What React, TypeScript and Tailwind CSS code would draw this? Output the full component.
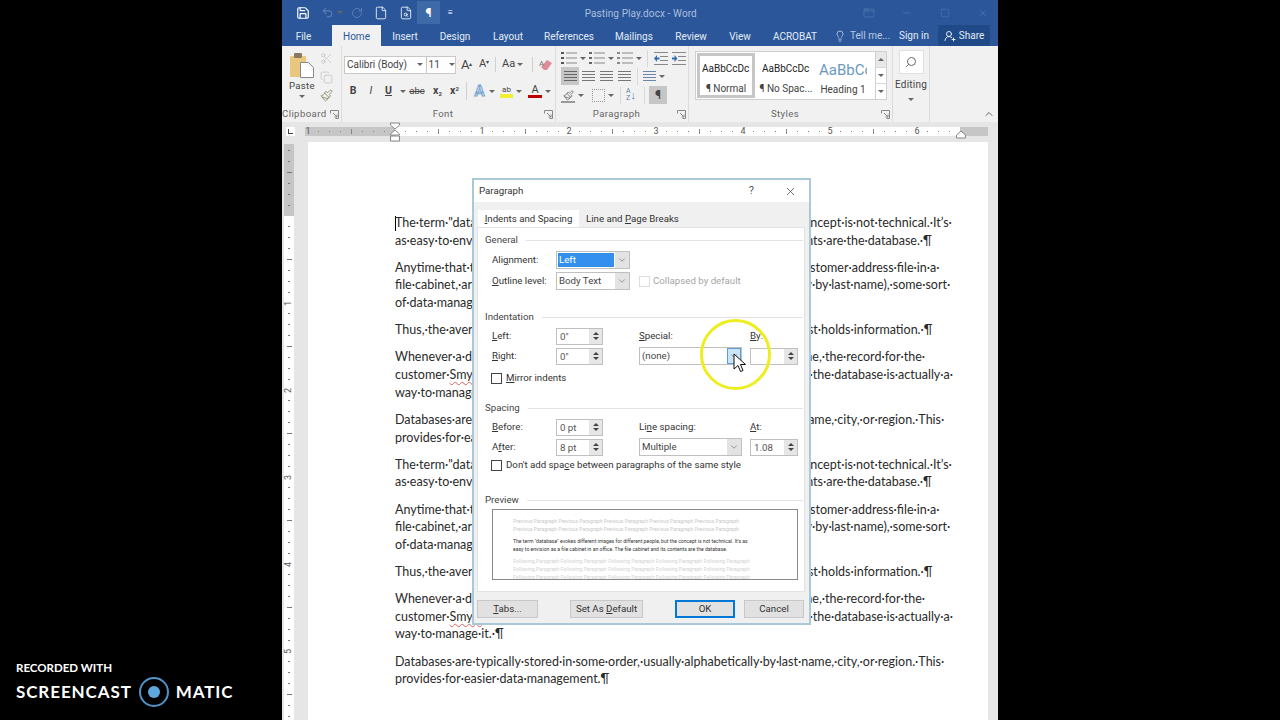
import React from 'react';
import { Save, Undo2, RotateCw, File, FileSearch, Scissors, Copy, Paintbrush, Search, UserRoundPlus, Lightbulb, X, Minus, Square, ChevronUp, ChevronDown, AppWindow } from 'lucide-react';

const paragraphs: string[][] = [
  ['The·term·"database"·evokes·different·images·for·different·people,·but·the·concept·is·not·technical.·It’s·', 'as·easy·to·envision·as·a·file·cabinet·in·a·office.·The·file·cabinet·and·its·contents·are·the·database.·¶'],
  ['Anytime·that·there·is·organized·information,·such·as·when·you·do·keep·a·customer·address·file·in·a·', 'file·cabinet,·arranged·and·filed·in·a·very·specific·order·(such·as·alphabetically·by·last·name),·some·sort·', 'of·data·management·is·occurring.¶'],
  ['Thus,·the·average·person·on·the·street·already·knows·that·a·big·database·just·holds·information.·¶'],
  ['Whenever·a·database·is·quickly·searched·for·a·very·particular·customer·name,·the·record·for·the·', 'customer·Smyth·is·returned·immediately·and·correctly·to·a·user.·In·this·way,·the·database·is·actually·a·', 'way·to·manage·it.·¶'],
  ['Databases·are·typically·stored·in·some·order,·usually·alphabetically·by·last·name,·city,·or·region.·This·', 'provides·for·easier·data·management.¶'],
];

const tabs = [
  { label: 'File', w: 'w-[43px] mr-[7px]' },
  { label: 'Home', w: 'w-[49px] bg-[#f1f1f1] text-[#2b579a]' },
  { label: 'Insert', w: 'w-[48px]' },
  { label: 'Design', w: 'w-[52px]' },
  { label: 'Layout', w: 'w-[54px]' },
  { label: 'References', w: 'w-[68px]' },
  { label: 'Mailings', w: 'w-[62px]' },
  { label: 'Review', w: 'w-[52px]' },
  { label: 'View', w: 'w-[46px]' },
  { label: 'ACROBAT', w: 'w-[64px]' },
];

function Caret({ className = '' }: { className?: string }) {
  return <span className={'inline-block h-0 w-0 shrink-0 border-x-[3px] border-t-[3px] border-x-transparent border-t-[#666] ' + className} />;
}

function Lines({ n, w = 13, color = '#777' }: { n: number; w?: number; color?: string }) {
  return (
    <svg width={w} height={n * 3 + 1} className="block">
      {Array.from({ length: n }).map((_, i) => (
        <rect key={i} x={0} y={i * 3 + 1} width={w} height={1} fill={color} />
      ))}
    </svg>
  );
}

function IndentIcon({ flip }: { flip?: boolean }) {
  return (
    <svg width="14" height="13" viewBox="0 0 14 13" className="block">
      <rect x="0" y="0" width="14" height="1" fill="#888" />
      <rect x="6" y="4" width="8" height="1" fill="#888" />
      <rect x="6" y="8" width="8" height="1" fill="#888" />
      <rect x="0" y="12" width="14" height="1" fill="#888" />
      <path d={flip ? 'M0 5.5h2.5V3l3 3.5-3 3.5V7.500H0z' : 'M5.500 5.500H3V3L0 6.500 3 10V7.500h2.500z'} fill="#2f6fb5" />
    </svg>
  );
}

function ListIcon({ marker }: { marker: string }) {
  return (
    <span className="flex items-center gap-[3px]">
      <svg width="16" height="14" viewBox="0 0 16 14">
        <rect x="0" y="1" width="3" height="2" fill={marker} />
        <rect x="0" y="6" width="3" height="2" fill={marker} />
        <rect x="0" y="11" width="3" height="2" fill={marker} />
        <rect x="5" y="1.5" width="11" height="1" fill="#888" />
        <rect x="5" y="6.5" width="11" height="1" fill="#888" />
        <rect x="5" y="11.5" width="11" height="1" fill="#888" />
      </svg>
      <Caret />
    </span>
  );
}

function Launcher() {
  return (
    <svg width="9" height="9" viewBox="0 0 9 9" className="shrink-0">
      <path d="M.5 3.500V.5h8v8h-3M3 3l4 4M7 4.500V7H4.500" fill="none" stroke="#888" />
    </svg>
  );
}

function Group({ width, label, labelClass = '', children }: { width: string; label: string; labelClass?: string; children: React.ReactNode }) {
  return (
    <div className={'flex h-full shrink-0 flex-col border-r border-[#dcdcdc] ' + width}>
      <div className="min-h-0 flex-1">{children}</div>
      <div className="flex h-[16px] items-center pr-[2px] text-[#666]">
        <span className={'flex-1 pt-px text-center text-[9.6px] tracking-[0.4px] ' + labelClass}>{label}</span>
        <Launcher />
      </div>
    </div>
  );
}

function RulerInch({ label }: { label?: string }) {
  return (
    <div className="grid h-full w-[87px] shrink-0 grid-cols-8 items-center">
      {Array.from({ length: 8 }).map((_, i) => (
        <div key={i} className="flex h-full w-0 items-center justify-center overflow-visible">
          {i === 0 ? (
            label ? <span className="text-[9px] leading-none text-[#555]">{label}</span> : null
          ) : i === 4 ? (
            <span className="h-[5px] w-px shrink-0 bg-[#888]" />
          ) : (
            <span className="h-px w-px shrink-0 bg-[#888]" />
          )}
        </div>
      ))}
    </div>
  );
}

function VRulerInch({ label }: { label?: string }) {
  return (
    <div className="grid h-[87px] w-full shrink-0 grid-rows-8 justify-items-center">
      {Array.from({ length: 8 }).map((_, i) => (
        <div key={i} className="flex h-0 w-full items-center justify-center overflow-visible">
          {i === 0 ? (
            label ? <span className="-rotate-90 text-[9px] leading-none text-[#555]">{label}</span> : null
          ) : i === 4 ? (
            <span className="h-px w-[5px] shrink-0 bg-[#777]" />
          ) : (
            <span className="h-px w-[2px] shrink-0 bg-[#777]" />
          )}
        </div>
      ))}
    </div>
  );
}

function SpinBox({ value, className = 'w-[47px]' }: { value: string; className?: string }) {
  return (
    <div className={'flex h-[17px] items-stretch border border-[#c0c0c0] bg-white ' + className}>
      <span className="flex-1 pl-[3px] leading-[15px] text-[#555]">{value}</span>
      <span className="flex w-[13px] flex-col items-center justify-center gap-[2px] bg-[#e6e6e6]">
        <span className="h-0 w-0 border-x-[3px] border-b-[3px] border-x-transparent border-b-[#444]" />
        <span className="h-0 w-0 border-x-[3px] border-t-[3px] border-x-transparent border-t-[#444]" />
      </span>
    </div>
  );
}

function Select({ value, className, selected, active }: { value: string; className: string; selected?: boolean; active?: boolean }) {
  return (
    <div className={'flex h-[18px] items-stretch border border-[#c0c0c0] bg-white ' + className}>
      <span className={'m-px flex-1 pl-px leading-[14px] ' + (selected ? 'bg-[#3390ee] text-white' : 'text-[#444]')}>{value}</span>
      <span className={'flex w-[14px] items-center justify-center ' + (active ? 'border border-[#5a9fd8] bg-[#cce4f7]' : 'bg-[#e3e3e3]')}>
        <ChevronDown size={10} strokeWidth={1.5} color="#666" />
      </span>
    </div>
  );
}

function Check({ disabled }: { disabled?: boolean }) {
  return <span className={'block h-[11px] w-[11px] shrink-0 border bg-white ' + (disabled ? 'border-[#ddd]' : 'border-[#444]')} />;
}

function Heading({ children }: { children: React.ReactNode }) {
  return (
    <div className="flex h-[18px] items-center gap-[8px] pl-[7px] pr-[1px] text-[#444]">
      <span className="pt-px">{children}</span>
      <span className="h-px flex-1 bg-[#e3e3e3]" />
    </div>
  );
}

function DialogButton({ children, className = '' }: { children: React.ReactNode; className?: string }) {
  return <button className={'flex h-[18px] w-[60px] items-center justify-center bg-[#e1e1e1] text-[#333] ' + className}>{children}</button>;
}

function Preview() {
  const prev = 'Previous Paragraph Previous Paragraph Previous Paragraph Previous Paragraph Previous Paragraph';
  const next = 'Following Paragraph Following Paragraph Following Paragraph Following Paragraph Following Paragraph';
  return (
    <div className="ml-[14px] h-[71px] w-[306px] overflow-hidden border border-[#8a8a8a] bg-white pl-[20px] pt-[7px] text-[5.1px] leading-[8px] whitespace-nowrap">
      <div className="text-[#c8c8c8]">{prev}</div>
      <div className="text-[#c8c8c8]">{prev}</div>
      <div className="mt-[4px] text-[#333]">The term "database" evokes different images for different people, but the concept is not technical. It's as</div>
      <div className="text-[#333]">easy to envision as a file cabinet in an office. The file cabinet and its contents are the database.</div>
      <div className="mt-[4px] text-[#d2d2d2]">{next}</div>
      <div className="text-[#d2d2d2]">{next}</div>
      <div className="text-[#d2d2d2]">{next}</div>
    </div>
  );
}

function ParagraphDialog() {
  return (
    <div className="absolute left-[472px] top-[178px] z-10 flex h-[447px] w-[339px] flex-col border-2 border-[#a9c8d8] bg-[#f0f0f0] text-[9.7px] text-[#333] [font-family:Roboto,sans-serif]">
      <div className="flex h-[22px] shrink-0 items-center bg-white pl-[5px] text-[#333]">
        <span className="flex-1">Paragraph</span>
        <span className="mr-[30px] text-[11px] text-[#555]">?</span>
        <X size={13} strokeWidth={1.2} color="#333" className="mr-[12px]" />
      </div>
      <div className="flex h-[25px] shrink-0 items-end pl-[4px]">
        <div className="flex h-[17px] w-[101px] items-center justify-center bg-white pt-[2px]"><span><u>I</u>ndents and Spacing</span></div>
        <div className="flex h-[17px] items-center pl-[7px] pt-[2px]"><span>Line and <u>P</u>age Breaks</span></div>
      </div>
      <div className="ml-[3px] mr-[4px] flex h-[365px] shrink-0 flex-col border border-[#e2e2e2] bg-white pt-[3px]">
        <Heading>General</Heading>
        <div className="mt-px flex h-[20px] items-center pl-[14px] [&>span]:pt-px">
          <span className="w-[64px]">Ali<u>g</u>nment:</span>
          <Select value="Left" selected className="w-[74px]" />
        </div>
        <div className="mt-px flex h-[20px] items-center pl-[14px] [&>span]:pt-px">
          <span className="w-[64px]"><u>O</u>utline level:</span>
          <Select value="Body Text" className="w-[74px]" />
          <span className="ml-[9px] mr-[3px]"><Check disabled /></span>
          <span className="text-[#a6a6a6]">Collapsed by default</span>
        </div>
        <div className="mt-[17px]"><Heading>Indentation</Heading></div>
        <div className="mt-px flex h-[18px] items-center pl-[14px] [&>span]:pt-px">
          <span className="w-[64px]"><u>L</u>eft:</span>
          <SpinBox value="0&quot;" />
          <span className="ml-[36px] w-[111px]"><u>S</u>pecial:</span>
          <span><u>B</u>y:</span>
        </div>
        <div className="mt-[2px] flex h-[18px] items-center pl-[14px] [&>span]:pt-px">
          <span className="w-[64px]"><u>R</u>ight:</span>
          <SpinBox value="0&quot;" />
          <Select value="(none)" active className="ml-[36px] w-[103px]" />
          <SpinBox value="" className="ml-[8px] w-[48px]" />
        </div>
        <div className="mt-[4px] flex h-[18px] items-center gap-[3px] pl-[13px] [&>span]:pt-px">
          <Check />
          <span className="ml-[1px]"><u>M</u>irror indents</span>
        </div>
        <div className="mt-[12px]"><Heading>Spacing</Heading></div>
        <div className="mt-px flex h-[18px] items-center pl-[14px] [&>span]:pt-px">
          <span className="w-[64px]"><u>B</u>efore:</span>
          <SpinBox value="0 pt" />
          <span className="ml-[36px] w-[111px]">Li<u>n</u>e spacing:</span>
          <span><u>A</u>t:</span>
        </div>
        <div className="mt-[2px] flex h-[18px] items-center pl-[14px] [&>span]:pt-px">
          <span className="w-[64px]">A<u>f</u>ter:</span>
          <SpinBox value="8 pt" />
          <Select value="Multiple" className="ml-[36px] w-[103px]" />
          <SpinBox value="1.08" className="ml-[8px] w-[48px]" />
        </div>
        <div className="flex h-[18px] items-center gap-[3px] pl-[13px] [&>span]:pt-px">
          <Check />
          <span className="ml-[1px]">Don't add spa<u>c</u>e between paragraphs of the same style</span>
        </div>
        <div className="mt-[17px]"><Heading>Preview</Heading></div>
        <Preview />
      </div>
      <div className="flex flex-1 items-center pl-[3px] pt-[3px]">
        <DialogButton className="w-[61px] border border-[#c8c8c8]"><span><u>T</u>abs...</span></DialogButton>
        <DialogButton className="ml-[32px] w-[73px] border border-[#c8c8c8]"><span>Set As <u>D</u>efault</span></DialogButton>
        <DialogButton className="ml-[32px] border-2 border-[#0078d7]">OK</DialogButton>
        <DialogButton className="ml-[9px] border border-[#c8c8c8]">Cancel</DialogButton>
      </div>
    </div>
  );
}

function Ribbon() {
  return (
    <div className="flex h-[76px] shrink-0 bg-[#f1f1f1] text-[#444]">
      <Group width="w-[60px]" label="Clipboard" labelClass="text-left">
        <div className="flex pl-[8px] pt-[7px]">
          <div className="flex w-[24px] flex-col items-center">
            <svg width="24" height="25" viewBox="0 0 24 25" className="block shrink-0">
              <rect x="0" y="3" width="16" height="21" rx="1" fill="#e9c77f" />
              <rect x="4" y="0" width="8" height="5" rx="1" fill="#8a7a60" />
              <path d="M10.500 9.500h8l5 5v10h-13z" fill="#fff" stroke="#888" />
            </svg>
            <span className="mt-[1px] text-[9.6px] leading-[14px] tracking-[0.3px]">Paste</span>
            <Caret className="mt-[2px]" />
          </div>
          <div className="-mt-px ml-[6px] flex flex-col gap-[5.5px]">
            <Scissors size={13} strokeWidth={1.2} color="#bbb" />
            <Copy size={13} strokeWidth={1.2} color="#bbb" />
            <Paintbrush size={13} strokeWidth={1.6} color="#8a8a6a" />
          </div>
        </div>
      </Group>
      <Group width="w-[214px]" label="Font">
        <div className="pl-[2px] pt-[9px]">
          <div className="flex h-[19px] items-center">
            <div className="flex h-[18px] w-[112px] items-center border border-[#c8c8c8] bg-white text-[10px]">
              <span className="w-[77px] pl-[2px]">Calibri (Body)</span>
              <Caret />
              <span className="ml-[3px] h-full w-px bg-[#c8c8c8]" />
              <span className="w-[24px] pl-[2px]">11</span>
              <Caret />
            </div>
            <span className="ml-[5px] w-[18px] text-[13px]">A<sup className="text-[6px]">▴</sup></span>
            <span className="w-[15px] text-[11px]">A<sup className="text-[6px]">▾</sup></span>
            <span className="ml-px h-[15px] w-px bg-[#d0d0d0]" />
            <span className="ml-[6px] flex w-[24px] items-center gap-[2px] text-[11px]">Aa<Caret /></span>
            <span className="ml-[6px] h-[15px] w-px bg-[#d0d0d0]" />
            <svg width="14" height="13" viewBox="0 0 14 13" className="ml-[6px] shrink-0">
              <path d="M2 9l6-7 5 3-5 7H5z" fill="#e08a9a" />
              <text x="0" y="8" fontSize="8" fill="#777">A</text>
            </svg>
          </div>
          <div className="mt-[7px] flex h-[20px] items-center text-[10.5px]">
            <span className="w-[18px] text-center font-bold">B</span>
            <span className="w-[18px] text-center italic">I</span>
            <span className="w-[17px] text-center font-bold underline">U</span>
            <Caret className="ml-[3px]" />
            <span className="w-[22px] text-center text-[9.5px] line-through">abc</span>
            <span className="w-[19px] text-center font-bold">x<sub className="text-[6px]">2</sub></span>
            <span className="w-[15px] text-center font-bold">x<sup className="text-[6px]">2</sup></span>
            <span className="ml-[4px] h-[18px] w-px bg-[#d0d0d0]" />
            <span className="ml-[5px] w-[15px] text-center text-[15px] leading-none font-bold text-[#e4eef8] [-webkit-text-stroke:1px_#7aa7d0]">A</span>
            <Caret className="ml-[2px]" />
            <span className="ml-[5px] flex w-[13px] flex-col items-center text-[8px] leading-[9px]">
              ab<span className="h-[4px] w-full bg-[#f2ee30]" />
            </span>
            <Caret className="ml-[3px]" />
            <span className="ml-[6px] flex w-[14px] flex-col items-center text-[11px] leading-[11px]">
              A<span className="h-[3px] w-full bg-[#c00000]" />
            </span>
            <Caret className="ml-[3px]" />
          </div>
        </div>
      </Group>
      <Group width="w-[133px]" label="Paragraph">
        <div className="pl-[5px] pt-[3px]">
          <div className="flex h-[18px] items-center">
            <ListIcon marker="#555" />
            <span className="ml-[3px]"><ListIcon marker="#666" /></span>
            <span className="ml-[3px]"><ListIcon marker="#888" /></span>
            <span className="ml-[5px] h-[17px] w-px bg-[#d8d8d8]" />
            <span className="ml-[6px]"><IndentIcon /></span>
            <span className="ml-[4px]"><IndentIcon flip /></span>
          </div>
          <div className="flex h-[18px] items-center">
            <span className="flex h-[18px] w-[18px] items-center justify-center bg-[#c6c6c6]"><Lines n={4} color="#666" /></span>
            <span className="flex w-[18px] justify-center"><Lines n={4} /></span>
            <span className="flex w-[18px] justify-center"><Lines n={4} /></span>
            <span className="flex w-[18px] justify-center"><Lines n={4} /></span>
            <span className="ml-[4px] h-[17px] w-px bg-[#d8d8d8]" />
            <span className="ml-[5px] flex items-center gap-[3px]"><Lines n={4} color="#6b86ab" /><Caret /></span>
          </div>
          <div className="mt-px flex h-[18px] items-center">
            <span className="flex h-[15px] w-[14px] items-end justify-center border-b-2 border-[#999]"><Paintbrush size={11} color="#777" /></span>
            <Caret className="ml-[3px]" />
            <span className="ml-[8px] h-[13px] w-[13px] border border-dotted border-[#999]" />
            <Caret className="ml-[3px]" />
            <span className="ml-[6px] h-[17px] w-px bg-[#d8d8d8]" />
            <span className="ml-[5px] flex w-[14px] items-center text-[7px] leading-[7px] text-[#5f7fa8]">
              <span>A<br />Z</span>
              <span className="text-[11px] leading-none">↓</span>
            </span>
            <span className="ml-[4px] h-[17px] w-px bg-[#d8d8d8]" />
            <span className="ml-[4px] flex h-[18px] w-[18px] items-center justify-center bg-[#c6c6c6] text-[12px] font-bold">¶</span>
          </div>
        </div>
      </Group>
      <Group width="w-[204px]" label="Styles">
        <div className="ml-[6px] mt-[5px] flex h-[49px] w-[192px] border border-[#d0d0d0] bg-white">
          <div className="m-[1px] flex w-[58px] flex-col items-center justify-center gap-[8px] overflow-hidden border-[3px] border-[#c6c6c6] pt-[7px] text-[10px] leading-[12px] whitespace-nowrap">
            <span className="w-[48px] overflow-hidden text-[#222]">AaBbCcDc</span>
            <span>¶ Normal</span>
          </div>
          <div className="ml-[3px] flex w-[54px] flex-col items-center justify-center gap-[8px] overflow-hidden pt-[7px] text-[10px] leading-[12px] whitespace-nowrap">
            <span className="w-[48px] overflow-hidden text-[#222]">AaBbCcDc</span>
            <span>¶ No Spac...</span>
          </div>
          <div className="flex w-[60px] flex-col items-center justify-center gap-[6px] overflow-hidden pt-[6px] text-[10px] leading-[12px] whitespace-nowrap">
            <span className="w-[48px] overflow-hidden text-[15px] leading-[16px] text-[#6a9ac0]">AaBbCc</span>
            <span>Heading 1</span>
          </div>
          <div className="ml-auto flex w-[11px] flex-col border-l border-[#d0d0d0] bg-white">
            <span className="flex flex-1 items-center justify-center bg-[#e8e8e8]"><Caret className="rotate-180" /></span>
            <span className="flex flex-1 items-center justify-center border-y border-[#d8d8d8]"><Caret /></span>
            <span className="flex flex-1 items-center justify-center"><Caret /></span>
          </div>
        </div>
      </Group>
      <div className="flex w-[37px] shrink-0 flex-col items-center border-r border-[#dcdcdc] pt-[4px]">
        <span className="flex h-[24px] w-[25px] items-center justify-center border border-[#e0e0e0] bg-white"><Search size={12} strokeWidth={2} color="#666" className="-scale-x-100" /></span>
        <span className="mt-[3px] text-[10px] tracking-[0.2px]">Editing</span>
        <Caret className="mt-[6px]" />
      </div>
      <div className="flex flex-1 items-end justify-end pb-[2px] pr-[3px]"><ChevronUp size={12} strokeWidth={2} color="#666" /></div>
    </div>
  );
}

function HRuler() {
  return (
    <div className="flex h-[18px] shrink-0 items-center bg-[#e6e6e6]">
      <span className="ml-[4px] flex h-[9px] w-[9px] items-center justify-center bg-white">
        <span className="h-[5px] w-[5px] border-b border-l border-[#444]" />
      </span>
      <div className="ml-[10px] flex h-[9px] w-[90px] justify-end overflow-hidden bg-[#c6c6c6]"><RulerInch label="1" /></div>
      <div className="flex h-[9px] w-[565px] overflow-hidden bg-white">
        <RulerInch />
        <RulerInch label="1" />
        <RulerInch label="2" />
        <RulerInch label="3" />
        <RulerInch label="4" />
        <RulerInch label="5" />
        <RulerInch label="6" />
      </div>
      <div className="h-[9px] w-[28px] bg-[#c6c6c6]" />
    </div>
  );
}

function DocLine({ text }: { text: string }) {
  const parts = text.split('Smyth');
  if (parts.length === 1) return <>{text}</>;
  return (
    <>
      {parts[0]}
      <span className="underline decoration-[#e06060] decoration-wavy decoration-1 underline-offset-2">Smyth</span>
      {parts[1]}
    </>
  );
}

function Document() {
  return (
    <div className="flex min-h-0 flex-1 overflow-hidden bg-[#e6e6e6]">
      <div className="ml-[2px] mt-[4px] flex w-[10px] shrink-0 flex-col">
        <div className="flex h-[72px] shrink-0 flex-col justify-end overflow-hidden bg-[#c6c6c6]"><VRulerInch /></div>
        <div className="flex-1 bg-white">
          <VRulerInch /><VRulerInch label="1" /><VRulerInch label="2" /><VRulerInch label="3" /><VRulerInch label="4" /><VRulerInch label="5" />
        </div>
      </div>
      <div className="ml-[14px] mt-[2px] w-[680px] shrink-0 bg-white pl-[87px] pt-[72px] text-[12.5px] leading-[17.65px] whitespace-nowrap text-[#2a2a2a] [font-family:Lato,sans-serif]">
        {[0, 1].map((rep) => (
          <React.Fragment key={rep}>
            {paragraphs.map((lines, i) => (
              <div key={i} className="mb-[9.5px]">
                {lines.map((line, j) => (
                  <div key={j}>
                    {rep === 0 && i === 0 && j === 0 && <span className="-mr-px inline-block h-[15px] w-px bg-black align-middle" />}
                    <DocLine text={line} />
                  </div>
                ))}
              </div>
            ))}
          </React.Fragment>
        ))}
      </div>
    </div>
  );
}

function Watermark() {
  return (
    <div className="absolute left-[16px] top-[661px] text-white [font-family:Lato,sans-serif]">
      <div className="text-[11.5px] leading-[14px] font-bold">RECORDED WITH</div>
      <div className="mt-[1px] flex items-center text-[17px] leading-[30px] font-bold tracking-[0.9px]">
        <span>SCREENCAST</span>
        <svg width="32" height="32" viewBox="0 0 32 32" className="ml-[6px]">
          <circle cx="16" cy="16" r="14" fill="none" stroke="#4f93c8" strokeWidth="2" />
          <circle cx="16" cy="16" r="6" fill="#5ea8e0" />
        </svg>
        <span className="ml-[6px]">MATIC</span>
      </div>
    </div>
  );
}

export default function App() {
  return (
    <div className="relative h-[720px] w-[1280px] overflow-hidden bg-black [font-family:Roboto,sans-serif]">
      <div className="ml-[282px] flex h-full w-[716px] flex-col">
        {/* title bar */}
        <div className="flex h-[25px] shrink-0 items-center bg-[#2b579a] text-[#d8e2f1]">
          <Save size={14} className="ml-[14px]" color="#fff" />
          <Undo2 size={13} className="ml-[11px]" color="#5a7db5" />
          <Caret className="ml-[3px] border-t-[#5a7db5]" />
          <RotateCw size={12} className="ml-[8px]" color="#5a7db5" />
          <File size={14} className="ml-[11px]" strokeWidth={1.4} color="#fff" />
          <FileSearch size={14} className="ml-[11px]" strokeWidth={1.4} color="#fff" />
          <span className="ml-[4px] flex h-[23px] w-[23px] items-center justify-center bg-[#3e6aa8] text-[12px] font-bold text-white">¶</span>
          <span className="ml-[8px] text-[8px] text-white">≡</span>
          <span className="ml-[132px] w-[110px] pt-px text-[10px] tracking-[0.1px] whitespace-nowrap text-[#a9bfdf]">Pasting Play.docx - Word</span>
          <AppWindow size={12} className="ml-[168px]" strokeWidth={1} color="#5f83b8" />
          <Minus size={12} className="ml-[26px]" strokeWidth={1} color="#5f83b8" />
          <Square size={10} className="ml-[27px]" strokeWidth={1} color="#5f83b8" />
          <X size={12} className="ml-[27px]" strokeWidth={1} color="#5f83b8" />
        </div>
        {/* tabs */}
        <div className="flex h-[21px] shrink-0 items-stretch bg-[#2b579a] text-[10px] text-[#e3ebf6]">
          {tabs.map((t) => (
            <div key={t.label} className={'flex items-center justify-center pt-px ' + t.w}>{t.label}</div>
          ))}
          <Lightbulb size={12} strokeWidth={1.3} className="ml-[7px] self-center" />
          <span className="ml-[4px] w-[40px] self-center whitespace-nowrap text-[#b9cae3]">Tell me...</span>
          <span className="ml-[9px] w-[31px] self-center whitespace-nowrap">Sign in</span>
          <span className="ml-[8px] flex w-[52px] items-center justify-center gap-[3px] bg-[#1f4a87]">
            <UserRoundPlus size={12} />Share
          </span>
        </div>
        <Ribbon />
        <HRuler />
        <Document />
      </div>
      <ParagraphDialog />
      {/* left and right indent markers on the ruler */}
      <svg width="14" height="20" viewBox="0 0 14 20" className="absolute left-[388px] top-[122px] z-[5]">
        <path d="M2.500 1h9v2l-4.500 4-4.500-4zM7 8l4.500 4v1h-9v-1zM2.500 14h9v5h-9z" fill="#fff" stroke="#888" />
      </svg>
      <svg width="12" height="9" viewBox="0 0 12 9" className="absolute left-[955px] top-[130px] z-[5]">
        <path d="M6 1l4.500 4v3h-9V5z" fill="#fff" stroke="#888" />
      </svg>
      {/* highlight around the pointer */}
      <div className="absolute left-[700px] top-[319px] z-20 h-[71px] w-[71px] rounded-full border-[3px] border-[#eded20] blur-[0.5px]" />
      <svg width="14" height="20" viewBox="0 0 14 20" className="absolute left-[733px] top-[353px] z-30">
        <path d="M1 1v15l4-3.500 2.500 6 2.500-1-2.500-6h5z" fill="#fff" stroke="#111" strokeWidth="1" />
      </svg>
      <Watermark />
    </div>
  );
}
